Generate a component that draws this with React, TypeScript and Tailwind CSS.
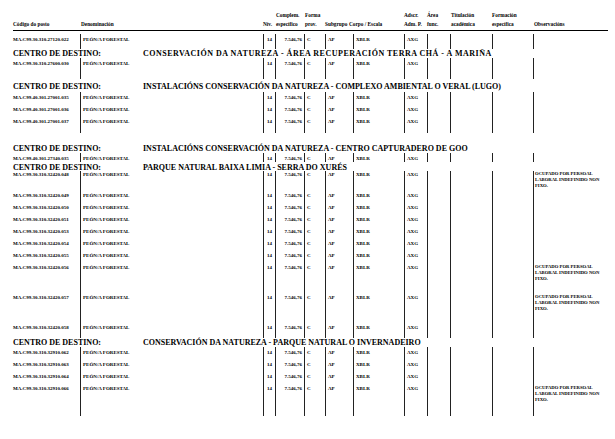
import React from "react";

type R = { code: string; h?: string; obs?: boolean; tight?: boolean };

const OBS = ["OCUPADO POR PERSOAL", "LABORAL INDEFINIDO NON", "FIXO."];

function Cells({ r, h }: { r?: R; h: string }) {
  const line = "border-l border-solid border-[#222222]";
  const pt = !r ? "" : r.tight ? "pt-[1px]" : "pt-[3px]";
  const opt = !r ? "" : r.tight ? "pt-[0px]" : "pt-[2px]";
  return (
    <div className={`flex overflow-hidden ${h}`}>
      <div className={`w-[80px] pl-[13px] ${pt} whitespace-nowrap`}>{r ? r.code : ""}</div>
      <div className={`w-[183px] ${line} pl-[2px] ${pt} whitespace-nowrap`}>{r ? "PEÓN/A FORESTAL" : ""}</div>
      <div className={`w-[12px] ${line} ${pt} text-center`}>{r ? "14" : ""}</div>
      <div className={`w-[29px] ${line} pr-[2px] ${pt} text-right whitespace-nowrap`}>{r ? "7.546,76" : ""}</div>
      <div className={`w-[21px] ${line} pl-[2px] ${pt}`}>{r ? "C" : ""}</div>
      <div className={`w-[28px] ${line} pl-[2px] ${pt}`}>{r ? "AP" : ""}</div>
      <div className={`w-[51px] ${line} pl-[2px] ${pt}`}>{r ? "XBLR" : ""}</div>
      <div className={`w-[23px] ${line} pl-[2px] ${pt}`}>{r ? "AXG" : ""}</div>
      <div className={`w-[23px] ${line}`}></div>
      <div className={`w-[42px] ${line}`}></div>
      <div className={`w-[41px] ${line}`}></div>
      <div className={`w-[77px] ${line} pl-[1px] ${opt} text-[4.7px] leading-[6px]`}>
        {r && r.obs
          ? OBS.map((t) => (
              <div key={t} className="whitespace-nowrap">
                {t}
              </div>
            ))
          : null}
      </div>
    </div>
  );
}

function Block({ rows, ext }: { rows: R[]; ext?: string }) {
  return (
    <div className="flex flex-col">
      {rows.map((r) => (
        <Cells key={r.code} r={r} h={r.h || "h-[12px]"} />
      ))}
      {ext ? <Cells h={ext} /> : null}
    </div>
  );
}

function Heading({ title, cls, tcls }: { title: string; cls: string; tcls?: string }) {
  return (
    <div className={`flex items-center pl-[13px] text-[8px] leading-[8px] whitespace-nowrap ${cls}`}>
      <span className="w-[130px]">CENTRO DE DESTINO:</span>
      <span className={tcls || ""}>{title}</span>
    </div>
  );
}

function H({ w, a, b }: { w: string; a?: string; b: string }) {
  return (
    <div className={`${w} flex flex-col whitespace-nowrap`}>
      <div className="h-[9px] leading-[9px]">{a || ""}</div>
      <div className="h-[9px] leading-[9px]">{b}</div>
    </div>
  );
}

export default function App() {
  const c = (p: string, n: string) => `MA.C99.${p}.${n}`;
  return (
    <div className="w-[615px] h-[439px] bg-white text-black overflow-hidden font-['Liberation_Serif','Times_New_Roman',serif] font-bold text-[5px] leading-[5px]">
      <div className="ml-[13px] w-[595px] pt-[11px] pb-[1px] border-b border-solid border-black flex text-[5.3px]">
        <H w="w-[68px]" b="Código do posto" />
        <H w="w-[182px]" b="Denominación" />
        <H w="w-[13px]" b="Nív." />
        <H w="w-[29px]" a="Complem." b="específico" />
        <H w="w-[20px]" a="Forma" b="prov." />
        <H w="w-[24px]" b="Subgrupo" />
        <H w="w-[55px]" b="Corpo / Escala" />
        <H w="w-[23px]" a="Adscr." b="Adm. P." />
        <H w="w-[24px]" a="Área" b="func." />
        <H w="w-[41px]" a="Titulación" b="académica" />
        <H w="w-[42px]" a="Formación" b="específica" />
        <H w="w-[60px]" b="Observacións" />
      </div>

      <div className="pt-[3px]">
        <Block rows={[{ code: c("30.310", "27120.022") }]} ext="h-[3px]" />
      </div>

      <Heading
        cls="h-[9px]"
        tcls="tracking-[0.5px]"
        title="CONSERVACIÓN DA NATUREZA - ÁREA RECUPERACIÓN TERRA CHÁ - A MARIÑA"
      />
      <Block rows={[{ code: c("30.310", "27600.030") }]} ext="h-[9px]" />

      <Heading cls="h-[9px] mt-[3px]" title="INSTALACIÓNS CONSERVACIÓN DA NATUREZA - COMPLEXO AMBIENTAL O VERAL (LUGO)" />
      <div className="pt-[1px]">
        <Block
          rows={[
            { code: c("40.301", "27001.035") },
            { code: c("40.301", "27001.036") },
            { code: c("40.301", "27001.037") },
          ]}
          ext="h-[5px]"
        />
      </div>

      <Heading cls="h-[9px] mt-[11px]" title="INSTALACIÓNS CONSERVACIÓN DA NATUREZA - CENTRO CAPTURADERO DE GOO" />
      <Block rows={[{ code: c("40.301", "27340.035"), h: "h-[9px]" }]} />

      <Heading cls="h-[7px] mt-[2px]" title="PARQUE NATURAL BAIXA LIMIA - SERRA DO XURÉS" />
      <Block
        rows={[
          { code: c("30.310", "32420.048"), obs: true, tight: true, h: "h-[19px]" },
          { code: c("30.310", "32420.049") },
          { code: c("30.310", "32420.050") },
          { code: c("30.310", "32420.051") },
          { code: c("30.310", "32420.053") },
          { code: c("30.310", "32420.054") },
          { code: c("30.310", "32420.055") },
          { code: c("30.310", "32420.056"), obs: true, h: "h-[30px]" },
          { code: c("30.310", "32420.057"), obs: true, h: "h-[30px]" },
          { code: c("30.310", "32420.058") },
        ]}
        ext="h-[4px]"
      />

      <Heading cls="h-[9px]" title="CONSERVACIÓN DA NATUREZA - PARQUE NATURAL O INVERNADEIRO" />
      <Block
        rows={[
          { code: c("30.310", "32910.062") },
          { code: c("30.310", "32910.063") },
          { code: c("30.310", "32910.064") },
          { code: c("30.310", "32910.066"), obs: true, h: "h-[24px]" },
        ]}
        ext="h-[9px]"
      />
    </div>
  );
}
